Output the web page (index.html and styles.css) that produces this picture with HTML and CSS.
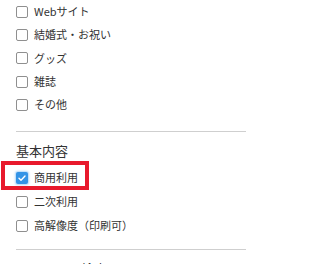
FILE: index.html
```html
<!DOCTYPE html>
<html lang="ja">
<head>
<meta charset="utf-8">
<link rel="stylesheet" href="styles.css">
</head>
<body>
<div class="panel">
  <div class="group group-first">
    <label class="row"><span class="box"></span><span class="label">Webサイト</span></label>
    <label class="row"><span class="box"></span><span class="label">結婚式・お祝い</span></label>
    <label class="row"><span class="box"></span><span class="label">グッズ</span></label>
    <label class="row"><span class="box"></span><span class="label">雑誌</span></label>
    <label class="row"><span class="box"></span><span class="label">その他</span></label>
  </div>
  <hr class="divider">
  <div class="heading">基本内容</div>
  <div class="group group-second">
    <label class="row highlighted"><span class="box checked"><svg viewBox="0 0 12 12" width="12" height="12"><path d="M3 6.3 L5 8.2 L9 4" fill="none" stroke="#fff" stroke-width="1.4" stroke-linecap="round" stroke-linejoin="round"/></svg></span><span class="label">商用利用</span><span class="mark"></span></label>
    <label class="row"><span class="box"></span><span class="label">二次利用</span></label>
    <label class="row"><span class="box"></span><span class="label">高解像度（印刷可）</span></label>
  </div>
  <hr class="divider divider-bottom">
  <div class="heading">キーワード検索</div>
</div>
</body>
</html>
```
FILE: styles.css
```css
html, body {
  margin: 0;
  padding: 0;
  background: #fff;
  overflow: hidden;
}
body {
  font-family: "Noto Sans CJK JP", "Noto Sans", sans-serif;
  color: #333;
}
.panel {
  margin-left: 16px;
  width: 230px;
}
.group {
  display: flex;
  flex-direction: column;
}
.group-first .row {
  height: 23.33px;
}
.group-second {
  margin-top: 5px;
}
.group-second .row {
  height: 24px;
}
.row {
  position: relative;
  display: flex;
  align-items: center;
  gap: 6px;
  font-size: 11px;
  line-height: 1;
}
.box {
  width: 12px;
  height: 12px;
  box-sizing: border-box;
  border: 1px solid #8f8f8f;
  border-radius: 2px;
  background: #fff;
  flex: none;
  display: flex;
}
.box.checked {
  border: none;
  background: #3393e6;
  box-shadow: 0 0 2px 1px rgba(70, 160, 240, 0.45);
}
.label {
  white-space: nowrap;
}
.mark {
  position: absolute;
  left: -15px;
  top: -5px;
  width: 88px;
  height: 29px;
  box-sizing: border-box;
  border: 4px solid #e8192c;
}
.divider {
  margin: 14px 0 0;
  border: none;
  border-top: 1px solid #cfcfcf;
  height: 0;
}
.divider-bottom {
  margin-top: 11px;
}
.heading {
  margin-top: 9px;
  font-size: 13px;
  line-height: 20px;
  height: 20px;
  white-space: nowrap;
}
```
